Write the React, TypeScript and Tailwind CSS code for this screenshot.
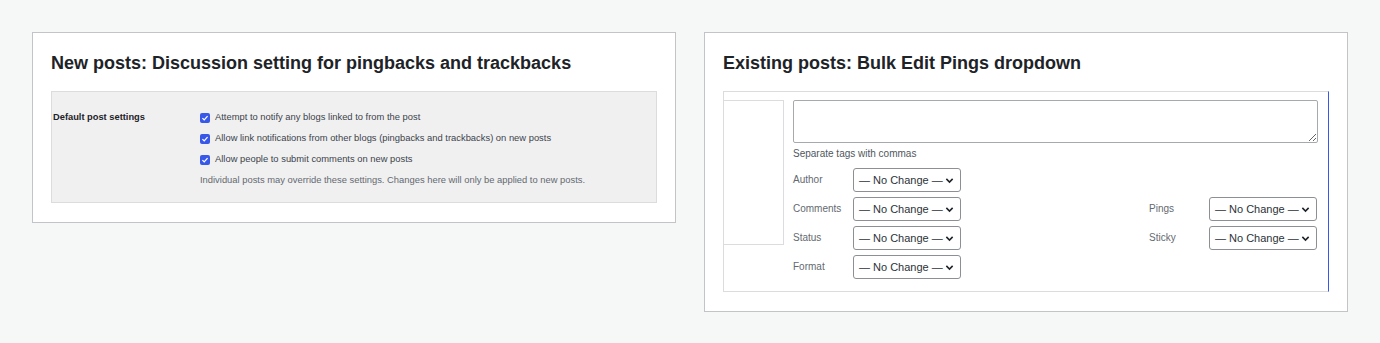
import React from "react";

const font = { fontFamily: '"Liberation Sans", Arial, sans-serif' };

const Checkbox = () => (
  <span className="flex h-[10px] w-[10px] items-center justify-center rounded-[2px] bg-[#3858e9]">
    <svg viewBox="0 0 10 10" className="h-[8px] w-[8px]">
      <polyline points="1.8,5.2 4,7.3 8.2,2.6" fill="none" stroke="#fff" strokeWidth="1.6" />
    </svg>
  </span>
);

const Select = () => (
  <div className="flex h-[24px] w-[108px] items-center justify-between rounded-[3px] border border-[#8c8f94] bg-white pl-[5px] pr-[6px] text-[11px] text-[#2c3338]">
    <span>— No Change —</span>
    <svg viewBox="0 0 10 10" className="h-[9px] w-[9px]">
      <polyline points="1.5,3.2 5,6.8 8.5,3.2" fill="none" stroke="#1d2327" strokeWidth="1.7" />
    </svg>
  </div>
);

const Field = ({ label }: { label: string }) => (
  <div className="flex h-[24px] items-center">
    <span className="w-[60px] pb-[1px] text-[10px] text-[#646970]">{label}</span>
    <Select />
  </div>
);

const Card = ({ title, children }: { title: string; children: React.ReactNode }) => (
  <div className="flex-1 border border-[#c3c4c7] bg-white px-[18px] pt-[18px] pb-[19px]">
    <h2 className="mb-[16px] text-[18px] leading-6 font-bold text-[#1d2327]">{title}</h2>
    {children}
  </div>
);

export default function App() {
  const options = [
    "Attempt to notify any blogs linked to from the post",
    "Allow link notifications from other blogs (pingbacks and trackbacks) on new posts",
    "Allow people to submit comments on new posts",
  ];

  return (
    <div className="flex h-[343px] items-start gap-7 bg-[#f6f7f7] px-8 pt-8" style={font}>
      <Card title="New posts: Discussion setting for pingbacks and trackbacks">
        <div className="flex border border-[#dcdcde] bg-[#f0f0f1] pt-[15px] pb-[11px]">
          <div className="w-[148px] pl-[1px]">
            <div className="flex h-[21px] items-center text-[9.3px] font-bold text-[#1d2327]">Default post settings</div>
          </div>
          <div className="flex flex-col">
            {options.map((o) => (
              <div key={o} className="flex h-[21px] items-center gap-[5px] text-[9.4px] text-[#3c434a]">
                <Checkbox />
                <span>{o}</span>
              </div>
            ))}
            <div className="flex h-[21px] items-center text-[9.4px] text-[#646970]">
              Individual posts may override these settings. Changes here will only be applied to new posts.
            </div>
          </div>
        </div>
      </Card>

      <Card title="Existing posts: Bulk Edit Pings dropdown">
        <div className="flex border border-[#dcdcde] border-r-[#3858e9] pt-[8px] pb-[12px] pr-[10px]">
          <div className="h-[145px] w-[60px] border-y border-r border-[#dcdcde]" />
          <div className="ml-[9px] flex flex-1 flex-col">
            <textarea
              readOnly
              className="h-[43px] w-full resize-y rounded-[2px] border border-[#a7aaad] bg-white"
            />
            <div className="mt-[3px] text-[10px] text-[#50575e]">Separate tags with commas</div>
            <div className="mt-[7px] flex justify-between">
              <div className="flex flex-col gap-[5px]">
                <Field label="Author" />
                <Field label="Comments" />
                <Field label="Status" />
                <Field label="Format" />
              </div>
              <div className="mr-[1px] flex flex-col gap-[5px] pt-[29px]">
                <Field label="Pings" />
                <Field label="Sticky" />
              </div>
            </div>
          </div>
        </div>
      </Card>
    </div>
  );
}
